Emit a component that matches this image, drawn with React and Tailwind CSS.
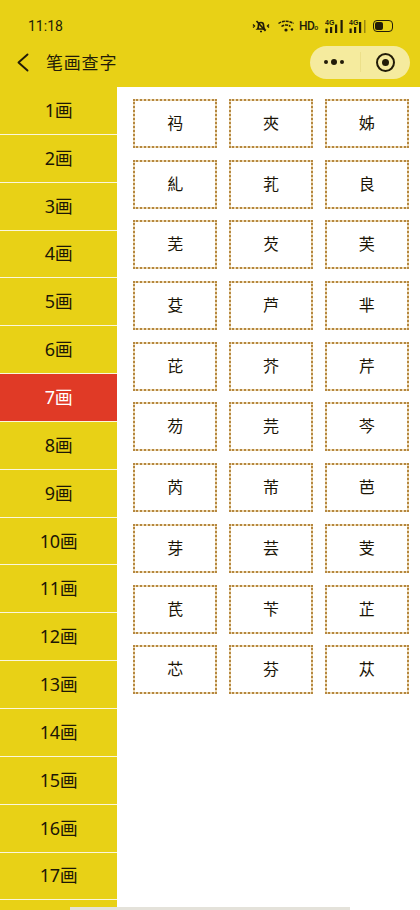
import React from "react";

const strokes = ["1画", "2画", "3画", "4画", "5画", "6画", "7画", "8画", "9画", "10画", "11画", "12画", "13画", "14画", "15画", "16画", "17画", ""];
const chars = ["祃", "夾", "姊", "糺", "芤", "良", "芜", "芡", "芙", "芟", "芦", "芈", "芘", "芥", "芹", "芴", "芫", "芩", "芮", "芾", "芭", "芽", "芸", "芰", "芪", "苄", "芷", "芯", "芬", "苁"];
const active = "7画";

function StatusIcons() {
  return (
    <div className="flex items-center text-[#221c08]">
      {/* muted bell */}
      <svg width="18" height="14" viewBox="0 0 18 14" fill="none" stroke="currentColor" strokeWidth="1.700" className="mr-[8px]">
        <path d="M5.500 10c1-1 1-2.500 1-4a2.500 2.500 0 0 1 5 0c0 1.500 0 3 1 4z" />
        <path d="M4.500 2l9 10M8 12.500h2" />
        <path d="M1 5.500L2.500 7 1 8.500M17 5.500L15.500 7 17 8.500" strokeWidth="1.400" />
      </svg>
      {/* wifi */}
      <svg width="16" height="12" viewBox="0 0 16 12" fill="none" stroke="currentColor" strokeWidth="1.500" strokeDasharray="3 0.800" className="mr-[5px]">
        <path d="M0.500 3.500c4-3 11-3 15 0" />
        <path d="M3.500 6.500c2.500-2 6.500-2 9 0" />
        <circle cx="8" cy="10" r="1.600" fill="currentColor" stroke="none" />
        <circle cx="14" cy="9.500" r="1.200" fill="currentColor" stroke="none" />
      </svg>
      <span className="mr-[7px] flex w-[19px] items-end font-['Roboto',sans-serif] text-[12px] font-medium leading-none tracking-[-0.6px]">
        HD<span className="text-[7px] leading-[8px]">o</span>
      </span>
      {/* signal 1 */}
      <svg width="18" height="14" viewBox="0 0 18 14" fill="currentColor" className="mr-[6px]">
        <text x="0" y="6" fontSize="7" fontWeight="700" fontFamily="Liberation Sans, sans-serif">4G</text>
        <rect x="0.500" y="9.500" width="2.200" height="4.500" />
        <rect x="5" y="8" width="2.200" height="6" />
        <rect x="10" y="5.500" width="2.200" height="8.500" />
        <rect x="15.500" y="1" width="2.200" height="13" />
      </svg>
      {/* signal 2 */}
      <svg width="17" height="14" viewBox="0 0 17 14" fill="currentColor" className="mr-[7px]">
        <text x="0" y="6" fontSize="7" fontWeight="700" fontFamily="Liberation Sans, sans-serif">4G</text>
        <rect x="0.500" y="9.500" width="2.200" height="4.500" />
        <rect x="5" y="8" width="2.200" height="6" />
        <rect x="10" y="3" width="2.200" height="11" />
        <rect x="15" y="1" width="1.500" height="13" opacity="0.4" />
      </svg>
      {/* battery */}
      <div className="flex h-[12px] w-[20px] items-center rounded-[4px] border-[1.500px] border-[#221c08] p-[1px]">
        <div className="h-full w-[8px] rounded-[2px] bg-[#221c08]" />
      </div>
    </div>
  );
}

export default function App() {
  return (
    <div className="relative h-[910px] w-[420px] overflow-hidden bg-white font-['Noto_Sans','Noto_Sans_CJK_SC',sans-serif]">
      <div className="h-[87px] bg-[#e8d116]">
        <div className="flex h-[38px] items-center justify-between pl-[28px] pr-[27px] pt-[14px]">
          <span className="font-['Roboto',sans-serif] text-[14px] leading-none text-[#221c08]">11:18</span>
          <StatusIcons />
        </div>
        <div className="flex h-[49px] items-center justify-between pb-[1px] pl-[17px] pr-[10px]">
          <div className="flex items-center">
            <svg width="12" height="19" viewBox="0 0 12 19" fill="none" stroke="#221c08" strokeWidth="1.900" strokeLinecap="round" strokeLinejoin="round">
              <path d="M10.500 1.500L1.500 9.500l9 8" />
            </svg>
            <span className="ml-[17px] text-[17px] leading-none tracking-[0.8px] text-[#221c08]">笔画查字</span>
          </div>
          <div className="flex h-[33px] w-[100px] items-center rounded-full bg-[#f5eb9e]">
            <div className="flex flex-1 items-center justify-center gap-[3px] pr-[3px]">
              <span className="h-[4px] w-[4px] rounded-full bg-[#221c08]" />
              <span className="h-[6px] w-[6px] rounded-full bg-[#221c08]" />
              <span className="h-[4px] w-[4px] rounded-full bg-[#221c08]" />
            </div>
            <div className="h-[20px] w-px bg-[#ece08a]" />
            <div className="flex w-[49px] items-center justify-center">
              <div className="flex h-[19px] w-[19px] items-center justify-center rounded-full border-[2.500px] border-[#221c08]">
                <div className="h-[7px] w-[7px] rounded-full bg-[#221c08]" />
              </div>
            </div>
          </div>
        </div>
      </div>

      <div className="flex">
        <div className="w-[117px] shrink-0">
          {strokes.map((s, i) => (
            <div
              key={i}
              className={`flex h-[47.85px] items-center justify-center border-b-[1.500px] border-[#fbf7dc] pb-[1px] text-[18px] leading-none tracking-[-0.3px] ${
                s === active ? "bg-[#e03a26] text-white" : "bg-[#e8d116] text-[#1c1706]"
              }`}
            >
              {s}
            </div>
          ))}
        </div>
        <div className="grid flex-1 grid-cols-3 content-start gap-x-[11.500px] gap-y-[11.700px] pl-[16px] pr-[11px] pt-[12px]">
          {chars.map((c) => (
            <div key={c} className="h-[49px] border-2 border-dotted border-[#b5873f] bg-[#ecd9b4]">
              <div className="flex h-full w-full items-center justify-center bg-white pb-[1px] text-[16px] leading-none text-[#1a1406]">
                {c}
              </div>
            </div>
          ))}
        </div>
      </div>

      {/* bottom gesture bar */}
      <div className="absolute bottom-0 left-[70px] h-[3px] w-[280px] bg-[#e4e2da]" />
    </div>
  );
}
